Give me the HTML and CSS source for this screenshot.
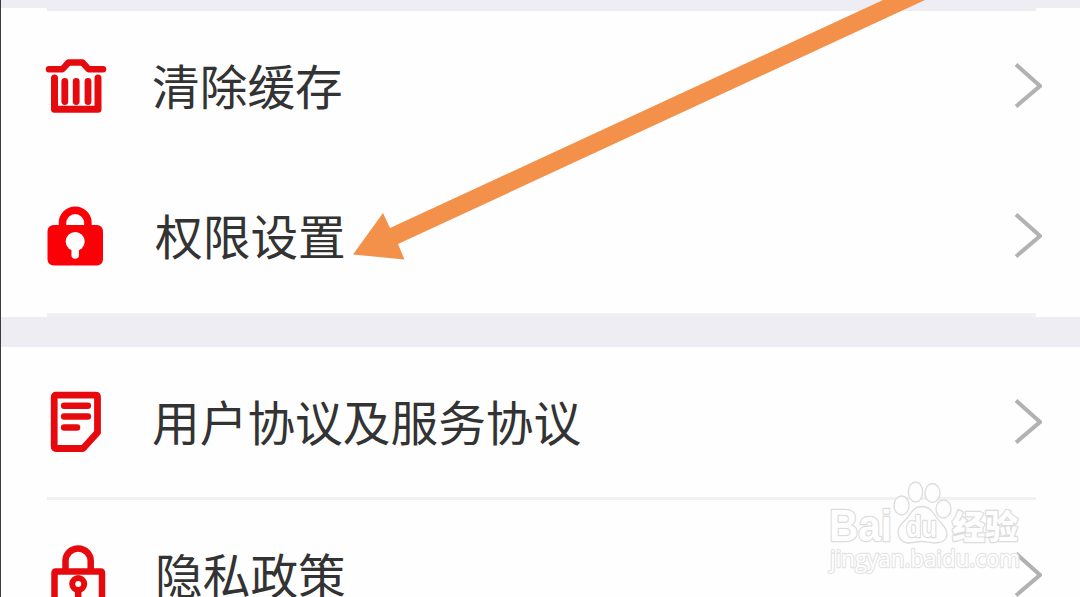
FILE: index.html
```
<!DOCTYPE html>
<html lang="zh-CN">
<head>
  <meta charset="UTF-8" />
  <meta name="viewport" content="width=device-width, initial-scale=1.0"/>
  <title>设置</title>
  <link rel="stylesheet" href="styles.css">
</head>
<body>
  <div class="page">
    <div class="band band-top"></div>
    <div class="section">
      <div class="divider divider-first"></div>
      <div class="row">
        <svg class="icon" viewBox="0 0 64 64">
          <path d="M5 15.200H18.500L24.500 8.500H38.500L44.500 15.200H59" stroke-width="6.500"/>
          <path d="M10.500 24V55.300H54V24" stroke-width="7"/>
          <path d="M20.800 27.500V47.500M32.200 27.500V47.500M44 27.500V47.500" stroke-width="6.800"/>
        </svg>
        <span class="label">清除缓存</span>
        <svg class="chevron" viewBox="0 0 30 48"><path d="M4 2.500L28 24L4 44.500"/></svg>
      </div>
      <div class="row row-permission">
        <svg class="icon icon-lock" viewBox="0 0 64 64">
          <path d="M18.500 24V19A12.700 12.700 0 0 1 43.900 19V24" stroke-width="7.500"/>
          <rect class="lock-body" x="3.500" y="21" width="55.500" height="40.500" rx="6"/>
          <circle class="hole" cx="31.200" cy="37.500" r="9.500"/>
          <path class="hole-stem" d="M31.200 40V51" stroke-width="7.500"/>
        </svg>
        <span class="label">权限设置</span>
        <svg class="chevron" viewBox="0 0 30 48"><path d="M4 2.500L28 24L4 44.500"/></svg>
      </div>
      <div class="divider divider-last"></div>
    </div>
    <div class="band"></div>
    <div class="section">
      <div class="row">
        <svg class="icon" viewBox="0 0 64 64">
          <path d="M12 5.200H51.500Q53.500 5.200 53.500 7V42.500L39 58.500H12Q10.200 58.500 10.200 56.500V7Q10.200 5.200 12 5.200Z" stroke-width="6.800"/>
          <path d="M20.200 15.700H43.800M20.200 26.500H43.800M20.200 37.500H33" stroke-width="6.600"/>
        </svg>
        <span class="label">用户协议及服务协议</span>
        <svg class="chevron" viewBox="0 0 30 48"><path d="M4 2.500L28 24L4 44.500"/></svg>
      </div>
      <div class="divider"></div>
      <div class="row row-privacy">
        <svg class="icon" viewBox="0 0 64 64">
          <path d="M21.500 27V18A12.600 12.600 0 0 1 46.700 18V27" stroke-width="6.500"/>
          <rect x="10.500" y="28.500" width="47.500" height="40" rx="1" stroke-width="6.500"/>
          <circle cx="34.200" cy="41" r="6" stroke-width="6"/>
          <path d="M34.200 48V62" stroke-width="6.500"/>
        </svg>
        <span class="label">隐私政策</span>
        <svg class="chevron" viewBox="0 0 30 48"><path d="M4 2.500L28 24L4 44.500"/></svg>
      </div>
    </div>

    <!-- pointer to the permission row -->
    <svg class="arrow" viewBox="0 0 1080 300">
      <path d="M353 254.500L383 213L390 228L883 0H925L398 244L404.500 259.500Z"/>
    </svg>

    <svg class="watermark" viewBox="0 0 200 100">
      <g class="mark">
        <text class="mark-bai" x="9" y="61" textLength="63" lengthAdjust="spacingAndGlyphs">Bai</text>
        <ellipse cx="81.500" cy="25.500" rx="7.500" ry="9.500"/>
        <ellipse cx="95.500" cy="12" rx="7.200" ry="10"/>
        <ellipse cx="112.500" cy="13" rx="7.500" ry="9.500"/>
        <ellipse cx="123.500" cy="29" rx="7.500" ry="9"/>
        <path d="M102 26.500C109 26.500 113 32 117 38C121 44 127 47 127 54C127 60 122 63 115 63C109 63 107 61.500 102 61.500C96 61.500 93 63 87 63C81 62 78 57 78 52C78 45 84 42 88 37C92 31 95 26.500 102 26.500Z"/>
        <text class="mark-du" x="86" y="57" textLength="31" lengthAdjust="spacingAndGlyphs">du</text>
        <text class="mark-cn" x="132" y="59" textLength="66">经验</text>
        <text class="mark-url" x="10" y="87" textLength="190" lengthAdjust="spacingAndGlyphs">jingyan.baidu.com</text>
      </g>
    </svg>
  </div>
</body>
</html>
```
FILE: styles.css
```
* {
  box-sizing: border-box;
}

body {
  margin: 0;
  background: #fefefe;
  font-family: "Noto Sans CJK SC", sans-serif;
  overflow: hidden;
}

.page {
  position: relative;
  width: 1080px;
  height: 597px;
  border-left: 1px solid #3c3c3c;
  overflow: hidden;
}

.band {
  height: 30px;
  background: #eeedf3;
}

.band-top {
  height: 8px;
}

.section {
  background: #fefefe;
}

.row {
  display: flex;
  align-items: center;
  height: 150px;
  padding: 0 38px 0 43px;
}

.icon {
  flex: none;
  width: 64px;
  height: 64px;
  fill: none;
  stroke: #e60a0e;
  stroke-linecap: round;
  stroke-linejoin: round;
}

.icon-lock {
  stroke: #fb0006;
}

.lock-body {
  fill: #fb0006;
  stroke: none;
}

.hole {
  fill: #fefefe;
  stroke: none;
}

.hole-stem {
  stroke: #fefefe;
}

.label {
  flex: 1;
  padding: 0 0 2px 44px;
  font-size: 47.7px;
  line-height: 70px;
  color: #333;
  white-space: nowrap;
}

.row-permission .label,
.row-privacy .label {
  padding-left: 47px;
}

.chevron {
  width: 30px;
  height: 48px;
  fill: none;
  stroke: #b2b2b2;
  stroke-width: 4;
}

.divider {
  height: 3px;
  margin: 0 44px 0 46px;
  background: #f1f1f1;
}

.divider-first {
  background: #eeedf1;
}

.divider-last {
  height: 4px;
  margin-top: 2px;
}

.arrow {
  position: absolute;
  top: 0;
  left: -1px;
  width: 1080px;
  height: 300px;
  fill: #f3914b;
}

/* outlined logo in the lower right corner */
.watermark {
  position: absolute;
  top: 480px;
  left: 819px;
  width: 200px;
  height: 100px;
  overflow: visible;
}

.mark {
  fill: #fefefe;
  stroke: #dcdcdc;
  stroke-width: 1.3;
}

.mark text {
  stroke-width: 2.4;
  stroke-linejoin: round;
  paint-order: stroke;
}

.mark-bai {
  font: bold 44px "Liberation Sans", sans-serif;
}

.mark-du {
  font: bold 29px "Liberation Sans", sans-serif;
}

.mark-cn {
  font: 900 33px "Noto Sans CJK SC", sans-serif;
}

.mark .mark-url {
  font: 400 24px "Open Sans", sans-serif;
  stroke: #e4e4e4;
}
```
